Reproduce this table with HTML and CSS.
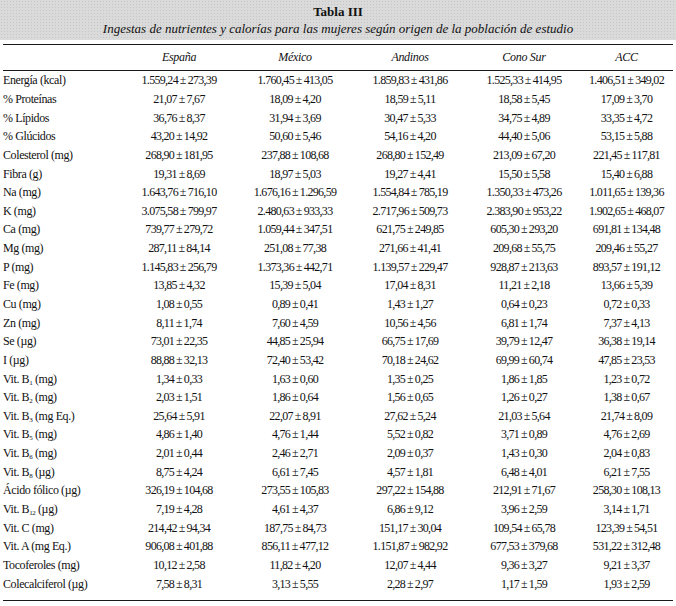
FILE: index.html
```html
<!DOCTYPE html>
<html lang="es">
<head>
<meta charset="utf-8">
<title>Tabla III</title>
<link rel="stylesheet" href="styles.css">
</head>
<body>
<div class="page">
  <div class="caption">
    <div class="caption-title">Tabla III</div>
    <div class="caption-sub">Ingestas de nutrientes y calorías para las mujeres según origen de la población de estudio</div>
  </div>
  <table class="data">
    <colgroup>
      <col class="c-label"><col class="c-esp"><col class="c-mex"><col class="c-and"><col class="c-cono"><col class="c-acc">
    </colgroup>
    <thead>
      <tr><th></th><th>España</th><th>México</th><th>Andinos</th><th>Cono Sur</th><th>ACC</th></tr>
    </thead>
    <tbody>
      <tr><td>Energía (kcal)</td><td>1.559,24 ± 273,39</td><td>1.760,45 ± 413,05</td><td>1.859,83 ± 431,86</td><td>1.525,33 ± 414,95</td><td>1.406,51 ± 349,02</td></tr>
      <tr><td>% Proteínas</td><td>21,07 ± 7,67</td><td>18,09 ± 4,20</td><td>18,59 ± 5,11</td><td>18,58 ± 5,45</td><td>17,09 ± 3,70</td></tr>
      <tr><td>% Lípidos</td><td>36,76 ± 8,37</td><td>31,94 ± 3,69</td><td>30,47 ± 5,33</td><td>34,75 ± 4,89</td><td>33,35 ± 4,72</td></tr>
      <tr><td>% Glúcidos</td><td>43,20 ± 14,92</td><td>50,60 ± 5,46</td><td>54,16 ± 4,20</td><td>44,40 ± 5,06</td><td>53,15 ± 5,88</td></tr>
      <tr><td>Colesterol (mg)</td><td>268,90 ± 181,95</td><td>237,88 ± 108,68</td><td>268,80 ± 152,49</td><td>213,09 ± 67,20</td><td>221,45 ± 117,81</td></tr>
      <tr><td>Fibra (g)</td><td>19,31 ± 8,69</td><td>18,97 ± 5,03</td><td>19,27 ± 4,41</td><td>15,50 ± 5,58</td><td>15,40 ± 6,88</td></tr>
      <tr><td>Na (mg)</td><td>1.643,76 ± 716,10</td><td>1.676,16 ± 1.296,59</td><td>1.554,84 ± 785,19</td><td>1.350,33 ± 473,26</td><td>1.011,65 ± 139,36</td></tr>
      <tr><td>K (mg)</td><td>3.075,58 ± 799,97</td><td>2.480,63 ± 933,33</td><td>2.717,96 ± 509,73</td><td>2.383,90 ± 953,22</td><td>1.902,65 ± 468,07</td></tr>
      <tr><td>Ca (mg)</td><td>739,77 ± 279,72</td><td>1.059,44 ± 347,51</td><td>621,75 ± 249,85</td><td>605,30 ± 293,20</td><td>691,81 ± 134,48</td></tr>
      <tr><td>Mg (mg)</td><td>287,11 ± 84,14</td><td>251,08 ± 77,38</td><td>271,66 ± 41,41</td><td>209,68 ± 55,75</td><td>209,46 ± 55,27</td></tr>
      <tr><td>P (mg)</td><td>1.145,83 ± 256,79</td><td>1.373,36 ± 442,71</td><td>1.139,57 ± 229,47</td><td>928,87 ± 213,63</td><td>893,57 ± 191,12</td></tr>
      <tr><td>Fe (mg)</td><td>13,85 ± 4,32</td><td>15,39 ± 5,04</td><td>17,04 ± 8,31</td><td>11,21 ± 2,18</td><td>13,66 ± 5,39</td></tr>
      <tr><td>Cu (mg)</td><td>1,08 ± 0,55</td><td>0,89 ± 0,41</td><td>1,43 ± 1,27</td><td>0,64 ± 0,23</td><td>0,72 ± 0,33</td></tr>
      <tr><td>Zn (mg)</td><td>8,11 ± 1,74</td><td>7,60 ± 4,59</td><td>10,56 ± 4,56</td><td>6,81 ± 1,74</td><td>7,37 ± 4,13</td></tr>
      <tr><td>Se (µg)</td><td>73,01 ± 22,35</td><td>44,85 ± 25,94</td><td>66,75 ± 17,69</td><td>39,79 ± 12,47</td><td>36,38 ± 19,14</td></tr>
      <tr><td>I (µg)</td><td>88,88 ± 32,13</td><td>72,40 ± 53,42</td><td>70,18 ± 24,62</td><td>69,99 ± 60,74</td><td>47,85 ± 23,53</td></tr>
      <tr><td>Vit. B<sub>1</sub> (mg)</td><td>1,34 ± 0,33</td><td>1,63 ± 0,60</td><td>1,35 ± 0,25</td><td>1,86 ± 1,85</td><td>1,23 ± 0,72</td></tr>
      <tr><td>Vit. B<sub>2</sub> (mg)</td><td>2,03 ± 1,51</td><td>1,86 ± 0,64</td><td>1,56 ± 0,65</td><td>1,26 ± 0,27</td><td>1,38 ± 0,67</td></tr>
      <tr><td>Vit. B<sub>3</sub> (mg Eq.)</td><td>25,64 ± 5,91</td><td>22,07 ± 8,91</td><td>27,62 ± 5,24</td><td>21,03 ± 5,64</td><td>21,74 ± 8,09</td></tr>
      <tr><td>Vit. B<sub>5</sub> (mg)</td><td>4,86 ± 1,40</td><td>4,76 ± 1,44</td><td>5,52 ± 0,82</td><td>3,71 ± 0,89</td><td>4,76 ± 2,69</td></tr>
      <tr><td>Vit. B<sub>6</sub> (mg)</td><td>2,01 ± 0,44</td><td>2,46 ± 2,71</td><td>2,09 ± 0,37</td><td>1,43 ± 0,30</td><td>2,04 ± 0,83</td></tr>
      <tr><td>Vit. B<sub>8</sub> (µg)</td><td>8,75 ± 4,24</td><td>6,61 ± 7,45</td><td>4,57 ± 1,81</td><td>6,48 ± 4,01</td><td>6,21 ± 7,55</td></tr>
      <tr><td>Ácido fólico (µg)</td><td>326,19 ± 104,68</td><td>273,55 ± 105,83</td><td>297,22 ± 154,88</td><td>212,91 ± 71,67</td><td>258,30 ± 108,13</td></tr>
      <tr><td>Vit. B<sub>12</sub> (µg)</td><td>7,19 ± 4,28</td><td>4,61 ± 4,37</td><td>6,86 ± 9,12</td><td>3,96 ± 2,59</td><td>3,14 ± 1,71</td></tr>
      <tr><td>Vit. C (mg)</td><td>214,42 ± 94,34</td><td>187,75 ± 84,73</td><td>151,17 ± 30,04</td><td>109,54 ± 65,78</td><td>123,39 ± 54,51</td></tr>
      <tr><td>Vit. A (mg Eq.)</td><td>906,08 ± 401,88</td><td>856,11 ± 477,12</td><td>1.151,87 ± 982,92</td><td>677,53 ± 379,68</td><td>531,22 ± 312,48</td></tr>
      <tr><td>Tocoferoles (mg)</td><td>10,12 ± 2,58</td><td>11,82 ± 4,20</td><td>12,07 ± 4,44</td><td>9,36 ± 3,27</td><td>9,21 ± 3,37</td></tr>
      <tr><td>Colecalciferol (µg)</td><td>7,58 ± 8,31</td><td>3,13 ± 5,55</td><td>2,28 ± 2,97</td><td>1,17 ± 1,59</td><td>1,93 ± 2,59</td></tr>
    </tbody>
  </table>
</div>
</body>
</html>
```
FILE: styles.css
```css
html, body {
  margin: 0;
  padding: 0;
  background: #ffffff;
}

.page {
  width: 676px;
  font-family: "Liberation Serif", "Times New Roman", serif;
  color: #111111;
}

.caption {
  height: 40px;
  box-sizing: border-box;
  padding-top: 4px;
  text-align: center;
  background-color: #dadada;
  background-image: radial-gradient(circle, #c6c6c6 0.7px, transparent 0.9px);
  background-size: 3px 3px;
}

.caption-title {
  font-weight: bold;
  font-size: 13px;
  line-height: 16px;
}

.caption-sub {
  font-style: italic;
  font-size: 13px;
  line-height: 18px;
}

.data {
  margin: 4px 0 0 3px;
  width: 670px;
  table-layout: fixed;
  border-collapse: collapse;
  border-top: 1px solid #1a1a1a;
  border-bottom: 1px solid #1a1a1a;
  font-size: 12px;
  letter-spacing: -0.5px;
}

.c-label { width: 117px; }
.c-esp { width: 118px; }
.c-mex { width: 114px; }
.c-and { width: 116px; }
.c-cono { width: 112px; }
.c-acc { width: 93px; }

.data th {
  height: 25px;
  padding: 0;
  font-weight: normal;
  font-style: italic;
  letter-spacing: -0.3px;
  text-align: center;
  vertical-align: middle;
  border-bottom: 1px solid #1a1a1a;
}

.data td {
  height: 18.65px;
  padding: 0;
  text-align: center;
  vertical-align: middle;
  white-space: nowrap;
  letter-spacing: -0.7px;
  word-spacing: -0.4px;
  line-height: 14px;
}

.data td:first-child {
  text-align: left;
  letter-spacing: -0.4px;
  word-spacing: 0;
}

.data tbody tr:last-child td {
  padding-bottom: 7px;
}

.data sub {
  font-size: 7px;
  line-height: 0;
  vertical-align: -2px;
}
```
